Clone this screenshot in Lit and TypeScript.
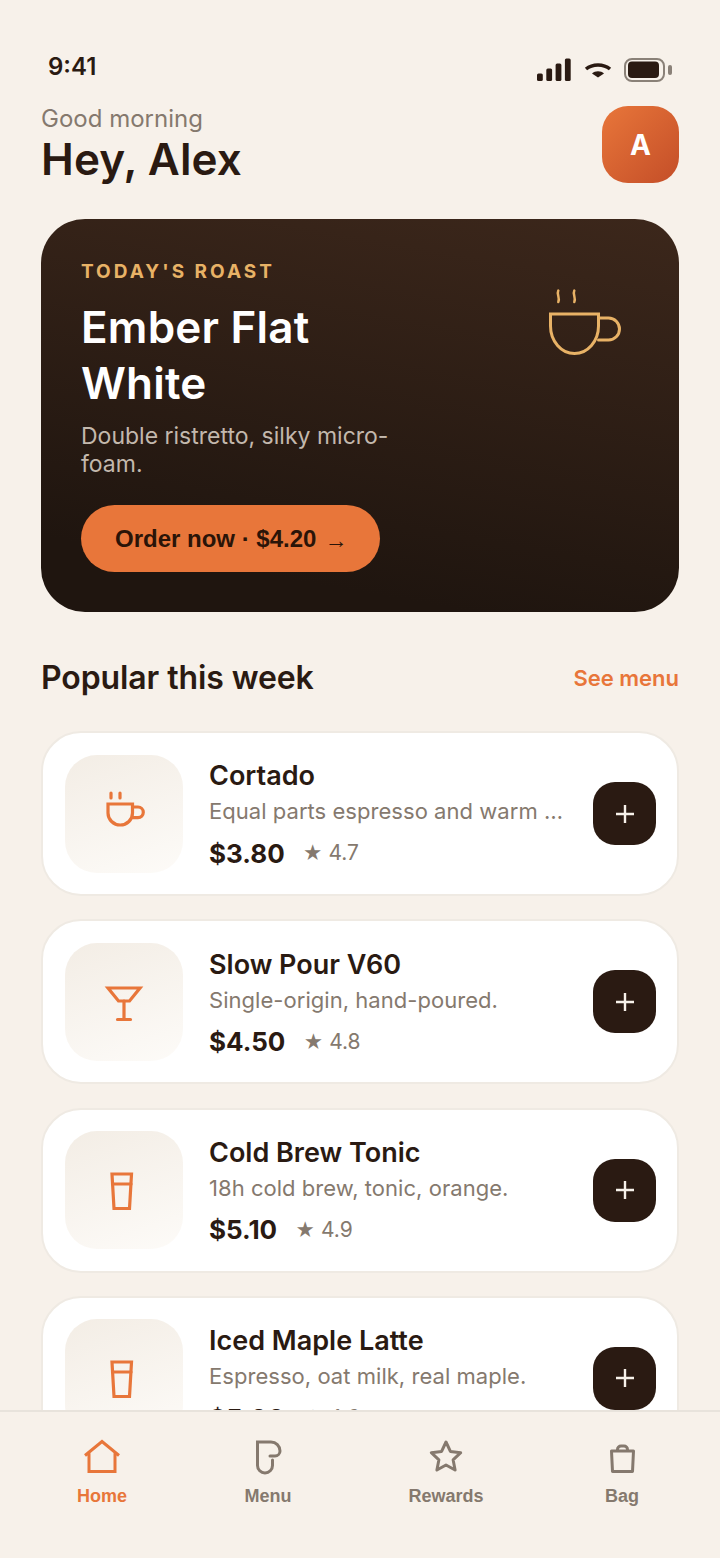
import { LitElement, html, css, svg } from "lit";
import { customElement, property } from "lit/decorators.js";

const cupIcon = svg`<path d="M8 14h24.500v9a12.250 12 0 0 1-24.500 0z"/><path d="M32.500 17H38a5.300 5.300 0 0 1 0 10.600h-5.500"/><path d="M11 3v5M20 3v5"/>`;
const glassIcon = svg`<path d="M8 10h32L29.500 23h-11z"/><path d="M24 23v18M17.500 41.500h13"/>`;
const tumblerIcon = svg`<path d="M12 8h19.500l-2 34.500H14z"/><path d="M12.500 18H31"/>`;

const products = [
  { name: "Cortado", note: "Equal parts espresso and warm milk.", price: "$3.80", rating: "4.7", icon: cupIcon },
  { name: "Slow Pour V60", note: "Single-origin, hand-poured.", price: "$4.50", rating: "4.8", icon: glassIcon },
  { name: "Cold Brew Tonic", note: "18h cold brew, tonic, orange.", price: "$5.10", rating: "4.9", icon: tumblerIcon },
  { name: "Iced Maple Latte", note: "Espresso, oat milk, real maple.", price: "$5.00", rating: "4.6", icon: tumblerIcon },
];

@customElement("product-card")
export class ProductCard extends LitElement {
  @property({ attribute: false }) item = products[0];

  static styles = css`
    :host {
      display: block;
    }

    .card {
      display: flex;
      align-items: center;
      box-sizing: border-box;
      height: 165px;
      padding: 0 21px 0 22px;
      background: #fff;
      border: 2px solid #efeae3;
      border-radius: 40px;
    }

    .thumb {
      flex: none;
      display: flex;
      align-items: center;
      justify-content: center;
      width: 118px;
      height: 118px;
      border-radius: 32px;
      background: linear-gradient(160deg, #f3ede5, #fdfbf8);
    }

    .thumb svg {
      width: 48px;
      height: 48px;
      fill: none;
      stroke: #e8763a;
      stroke-width: 3.2;
    }

    .info {
      flex: 1;
      min-width: 0;
      margin: 0 24px 0 26px;
      padding-top: 2.5px;
    }

    .name {
      font: 600 27px/36px Inter, sans-serif;
      color: #2a1a12;
    }

    .note {
      font: 400 22px/34px Inter, sans-serif;
      color: #85796e;
      letter-spacing: 0.04px;
      white-space: nowrap;
      overflow: hidden;
      text-overflow: ellipsis;
    }

    .meta {
      display: flex;
      align-items: center;
      gap: 18px;
      margin-top: 8px;
    }

    .price {
      font: 700 26px/34px Inter, sans-serif;
      color: #2a1a12;
    }

    .rating {
      font: 400 21px/34px Inter, sans-serif;
      color: #85796e;
    }

    .rating i {
      font-size: 19px;
      font-style: normal;
    }

    .add {
      flex: none;
      display: flex;
      align-items: center;
      justify-content: center;
      width: 63px;
      height: 63px;
      border-radius: 22px;
      background: #2a1a12;
    }

    .add svg {
      width: 20px;
      height: 20px;
      stroke: #f7f1ea;
      stroke-width: 2.4;
    }
  `;

  render() {
    const { name, note, price, rating, icon } = this.item;
    return html`
      <div class="card">
        <div class="thumb">
          <svg viewBox="0 0 48 48" stroke-linecap="round">${icon}</svg>
        </div>
        <div class="info">
          <div class="name">${name}</div>
          <div class="note">${note}</div>
          <div class="meta">
            <span class="price">${price}</span>
            <span class="rating"><i>★</i> ${rating}</span>
          </div>
        </div>
        <div class="add">
          <svg viewBox="0 0 20 20"><path d="M10 1v18M1 10h18" /></svg>
        </div>
      </div>
    `;
  }
}

@customElement("app-root")
export class AppRoot extends LitElement {
  static styles = css`
    :host {
      display: block;
      font-family: Inter, sans-serif;
      color: #2a1a12;
    }

    .screen {
      display: flex;
      flex-direction: column;
      height: 1558px;
      background: #f7f1ea;
      overflow: hidden;
    }

    .scroll {
      flex: 1;
      min-height: 0;
      overflow: hidden;
      padding: 0 41px;
    }

    .status {
      display: flex;
      align-items: center;
      justify-content: space-between;
      height: 30px;
      padding: 52px 7px 0;
      font: 600 24px/30px Inter, sans-serif;
    }

    .status-icons {
      display: flex;
      align-items: center;
      gap: 12.5px;
      margin-top: 5px;
    }

    .status-icons svg {
      display: block;
    }

    .head {
      display: flex;
      align-items: center;
      justify-content: space-between;
      margin-top: 21px;
    }

    .hello {
      padding-top: 1px;
      margin-bottom: -1px;
      font-size: 24px;
      line-height: 30px;
      color: #85796e;
    }

    .who {
      font-size: 44px;
      font-weight: 600;
      line-height: 52px;
      letter-spacing: 0.1px;
    }

    .avatar {
      display: flex;
      align-items: center;
      justify-content: center;
      box-sizing: border-box;
      width: 77px;
      height: 77px;
      padding-top: 1px;
      border-radius: 26px;
      background: linear-gradient(135deg, #e8763a, #c44e28);
      color: #fff;
      font-size: 28px;
      font-weight: 700;
    }

    .hero {
      position: relative;
      box-sizing: border-box;
      height: 393px;
      margin-top: 34px;
      padding: 40px;
      border-radius: 44px;
      background: linear-gradient(190deg, #3c271b, #1f150f 85%);
    }

    .eyebrow {
      font-size: 19px;
      font-weight: 700;
      line-height: 26px;
      letter-spacing: 3px;
      color: #e8b266;
    }

    .hero h1 {
      margin: 14px 0 0;
      width: 300px;
      font-size: 44px;
      font-weight: 600;
      line-height: 56px;
      letter-spacing: 0.2px;
      color: #fff;
    }

    .hero p {
      margin: 11px 0 0;
      width: 320px;
      font-size: 23px;
      line-height: 28px;
      color: #c3b8ad;
    }

    .order {
      display: inline-flex;
      align-items: center;
      gap: 8px;
      height: 67px;
      margin-top: 27px;
      padding: 0 33px 0 34px;
      border-radius: 34px;
      background: #e8763a;
      color: #2a1408;
      font: 700 24px "Liberation Sans", sans-serif;
    }

    .order span {
      margin-top: 4px;
      font: 400 23px "Liberation Sans", sans-serif;
    }

    .hero-cup {
      position: absolute;
      top: 68px;
      right: 56px;
      width: 76px;
      height: 70px;
      fill: none;
      stroke: #e8b266;
      stroke-width: 3;
    }

    .section {
      display: flex;
      align-items: center;
      justify-content: space-between;
      margin-top: 45px;
    }

    .section h2 {
      margin: 0;
      font-size: 32px;
      font-weight: 600;
      line-height: 42px;
      letter-spacing: -0.1px;
    }

    .section a {
      font: 600 22px Inter, sans-serif;
      color: #e8763a;
    }

    .list {
      display: flex;
      flex-direction: column;
      gap: 23.3px;
      margin-top: 32px;
    }

    nav {
      flex: none;
      display: grid;
      grid-template-columns: 204px 128px 228px 124px;
      box-sizing: border-box;
      height: 148px;
      padding-top: 26px;
      background: #f7f1ea;
      border-top: 2px solid #e8e3dc;
    }

    .tab {
      display: flex;
      flex-direction: column;
      align-items: center;
      gap: 5px;
      font: 700 18px/26px "Liberation Sans", sans-serif;
      color: #85796e;
    }

    .tab.active {
      color: #e8763a;
    }

    .tab svg {
      display: block;
      width: 40px;
      height: 40px;
      fill: none;
      stroke: currentColor;
      stroke-width: 3;
    }
  `;

  render() {
    return html`
      <div class="screen">
        <div class="scroll">
          <div class="status">
            <span>9:41</span>
            <span class="status-icons">
              <svg width="34" height="23" viewBox="0 0 34 23" fill="#2a1a12">
                <rect x="0" y="15.500" width="5.800" height="7.400" rx="1.500" />
                <rect x="9.300" y="10.500" width="5.800" height="12.400" rx="1.500" />
                <rect x="18.600" y="5.500" width="5.800" height="17.400" rx="1.500" />
                <rect x="27.900" y="0.500" width="5.800" height="22.400" rx="1.500" />
              </svg>
              <svg width="28" height="16" viewBox="0 0 28 16">
                <path d="M2 7C8.500 1.500 19.500 1.500 26 7" fill="none" stroke="#2a1a12" stroke-width="3.500" />
                <path d="M8 11.500C11 8.500 17 8.500 20 11.500L14 15.500z" fill="#2a1a12" />
              </svg>
              <svg width="48" height="24" viewBox="0 0 48 24">
                <rect x="1" y="1" width="39" height="22" rx="7" fill="none" stroke="#8a8178" stroke-width="2" />
                <rect x="4" y="3.500" width="31" height="16.500" rx="4" fill="#2a1a12" />
                <rect x="44" y="7" width="4" height="10" rx="2" fill="#8a8178" />
              </svg>
            </span>
          </div>

          <div class="head">
            <div>
              <div class="hello">Good morning</div>
              <div class="who">Hey, Alex</div>
            </div>
            <div class="avatar">A</div>
          </div>

          <div class="hero">
            <div class="eyebrow">TODAY'S ROAST</div>
            <h1>Ember Flat White</h1>
            <p>Double ristretto, silky micro-foam.</p>
            <div class="order">Order now · $4.20 <span>→</span></div>
            <svg class="hero-cup" viewBox="0 0 76 70" stroke-linecap="round">
              <path d="M3.500 27h48v12a24 27.500 0 0 1-48 0z" />
              <path d="M51.500 31h10a11 11 0 0 1 0 22h-10" />
              <path d="M11.300 3.500c-2 4 2 7 0 11.500M27.300 3.500c-2 4 2 7 0 11.500" stroke-width="2.500" />
            </svg>
          </div>

          <div class="section">
            <h2>Popular this week</h2>
            <a>See menu</a>
          </div>

          <div class="list">
            ${products.map((item) => html`<product-card .item=${item}></product-card>`)}
          </div>
        </div>

        <nav>
          <div class="tab active">
            <svg viewBox="0 0 40 40"><path d="M3 17.500 20 3.500l17 14M7 14.500v19h26v-19" /></svg>
            Home
          </div>
          <div class="tab">
            <svg viewBox="0 0 40 40" stroke-linecap="round">
              <path d="M24.500 22v5.500a7.500 7.500 0 0 1-15 0V4H23a9 9 0 0 1 9 9a5 5 0 0 1-5 5h-5" />
            </svg>
            Menu
          </div>
          <div class="tab">
            <svg viewBox="0 0 40 40" stroke-linejoin="round">
              <path d="M20 4l4.400 9.400 10.300 1.300-7.600 7.100 2 10.200-9.100-5-9.100 5 2-10.200-7.600-7.100 10.300-1.300z" />
            </svg>
            Rewards
          </div>
          <div class="tab">
            <svg viewBox="0 0 40 40" stroke-linejoin="round">
              <path d="M9.500 13h22l-1 20.500h-20zM15.500 13v-1.500a3.500 3.500 0 0 1 3.500-3.500h3a3.500 3.500 0 0 1 3.500 3.500V13" />
            </svg>
            Bag
          </div>
        </nav>
      </div>
    `;
  }
}
